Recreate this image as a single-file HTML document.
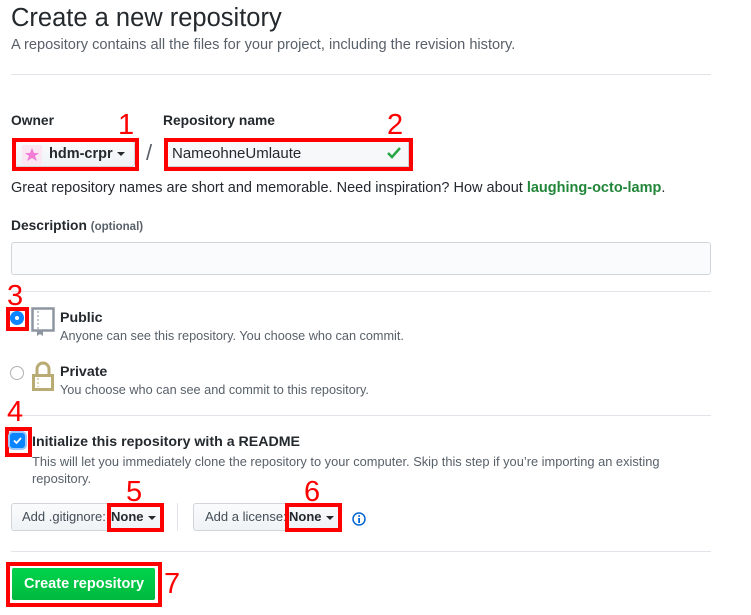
<!DOCTYPE html>
<html><head><meta charset="utf-8"><style>
*{box-sizing:border-box;margin:0;padding:0}
body{width:751px;height:615px;background:#fff;position:relative;font-family:"Liberation Sans",sans-serif;color:#24292e;overflow:hidden}
.a{position:absolute;white-space:nowrap}
.hr{position:absolute;left:11px;width:700px;height:1px;background:#e1e4e8}
.red{position:absolute;border:4px solid #f00}
.num{position:absolute;color:#f00;font-size:29px;line-height:28px}
.b{font-weight:bold}
.btn{position:absolute;background:linear-gradient(#fafbfc,#eff3f6);border:1px solid #d1d5da;border-radius:3px}
.caret{display:inline-block;width:0;height:0;border-left:4px solid transparent;border-right:4px solid transparent;border-top:4px solid #24292e;vertical-align:middle;margin-left:4px}
</style></head><body>
<div class="a" style="left:11px;top:3px;font-size:25.5px;line-height:30px">Create a new repository</div>
<div class="a" style="left:11px;top:37px;font-size:14.6px;color:#586069">A repository contains all the files for your project, including the revision history.</div>
<div class="hr" style="top:74px"></div>

<div class="a b" style="left:11px;top:113px;font-size:13.8px">Owner</div>
<div class="a b" style="left:163px;top:113px;font-size:13.8px">Repository name</div>
<div class="num" style="left:118px;top:111px">1</div>
<div class="num" style="left:387px;top:111px">2</div>
<div class="btn" style="left:15px;top:141px;width:120px;height:26px"></div>
<div class="red" style="left:12px;top:138px;width:127px;height:33px"></div>
<svg class="a" style="left:22px;top:145px" width="20" height="20"><rect width="20" height="20" fill="#fbe6f3"/><path d="M10 3 L12 8 L17 8 L13 11 L15 16 L10 13 L5 16 L7 11 L3 8 L8 8Z" fill="#f07ad4"/></svg>
<div class="a b" style="left:49px;top:146px;font-size:14.5px">hdm-crpr<span class="caret"></span></div>
<div class="a" style="left:146px;top:140px;font-size:22px;color:#586069">/</div>
<div class="a" style="left:167px;top:141px;width:242px;height:26px;background:#f6f8fa;border:1px solid #d1d5da"></div>
<div class="red" style="left:164px;top:138px;width:249px;height:33px"></div>
<div class="a" style="left:172px;top:145px;font-size:15px">NameohneUmlaute</div>
<svg class="a" style="left:386px;top:146px" width="16" height="14"><path d="M2 7 L6 11 L14 2" stroke="#28a745" stroke-width="2.5" fill="none"/></svg>
<div class="a" style="left:11px;top:180px;font-size:14.5px">Great repository names are short and memorable. Need inspiration? How about <b style="color:#22863a">laughing-octo-lamp</b>.</div>

<div class="a b" style="left:11px;top:218px;font-size:13.8px">Description <span style="font-size:11.5px;color:#586069">(optional)</span></div>
<div class="a" style="left:11px;top:242px;width:700px;height:33px;background:#fafbfc;border:1px solid #d1d5da;border-radius:3px"></div>
<div class="hr" style="top:291px"></div>

<div class="num" style="left:7px;top:282px">3</div>
<div class="red" style="left:6px;top:307px;width:23px;height:24px"></div>
<div class="a" style="left:10px;top:311px;width:14px;height:14px;border-radius:50%;background:#0a84ff"></div>
<div class="a" style="left:15px;top:316px;width:4px;height:4px;border-radius:50%;background:#fff"></div>
<svg class="a" style="left:31px;top:307px" width="24" height="30"><rect x="1.5" y="1.5" width="21" height="22" fill="none" stroke="#8d96a0" stroke-width="2.5"/><path d="M7 4v18" stroke="#8d96a0" stroke-dasharray="2 2"/><path d="M6 24v5l3-2 3 2v-5" fill="#8d96a0"/></svg>
<div class="a b" style="left:60px;top:310px;font-size:14.2px">Public</div>
<div class="a" style="left:60px;top:329px;font-size:12.7px;color:#586069">Anyone can see this repository. You choose who can commit.</div>

<div class="a" style="left:10px;top:366px;width:14px;height:14px;border-radius:50%;border:1px solid #b0b0b0;background:#fff"></div>
<svg class="a" style="left:31px;top:361px" width="24" height="31"><path d="M6 13V8a6 6 0 0 1 12 0v5" fill="none" stroke="#b9ab74" stroke-width="3"/><rect x="1" y="13" width="22" height="17" fill="#b9ab74"/><rect x="4" y="16" width="16" height="11" fill="#fff"/><path d="M7 17v9" stroke="#b9ab74" stroke-dasharray="2 2"/></svg>
<div class="a b" style="left:60px;top:364px;font-size:14.2px">Private</div>
<div class="a" style="left:60px;top:383px;font-size:12.7px;color:#586069">You choose who can see and commit to this repository.</div>
<div class="hr" style="top:415px"></div>

<div class="num" style="left:7px;top:398px">4</div>
<div class="red" style="left:5px;top:427px;width:27px;height:30px"></div>
<div class="a" style="left:10px;top:433px;width:15px;height:15px;border-radius:3px;background:#0a84ff;box-shadow:0 0 0 2px #9cc8fb"></div>
<svg class="a" style="left:12px;top:435px" width="11" height="11"><path d="M2 5.5 L4.5 8 L9 3" stroke="#fff" stroke-width="1.8" fill="none"/></svg>
<div class="a b" style="left:32px;top:434px;font-size:14.2px">Initialize this repository with a README</div>
<div class="a" style="left:32px;top:454px;font-size:12.85px;color:#586069">This will let you immediately clone the repository to your computer. Skip this step if you’re importing an existing</div>
<div class="a" style="left:32px;top:471px;font-size:12.85px;color:#586069">repository.</div>

<div class="btn" style="left:11px;top:503px;width:151px;height:28px"></div>
<div class="a" style="left:22px;top:509px;font-size:13px;color:#444d56">Add .gitignore:</div>
<div class="red" style="left:107px;top:503px;width:57px;height:29px"></div>
<div class="a b" style="left:111px;top:509px;font-size:13px">None<span class="caret"></span></div>
<div class="num" style="left:126px;top:478px">5</div>
<div class="a" style="left:177px;top:503px;width:1px;height:28px;background:#e1e4e8"></div>
<div class="btn" style="left:193px;top:503px;width:148px;height:28px"></div>
<div class="a" style="left:205px;top:509px;font-size:13px;color:#444d56">Add a license:</div>
<div class="red" style="left:285px;top:503px;width:57px;height:29px"></div>
<div class="a b" style="left:289px;top:509px;font-size:13px">None<span class="caret"></span></div>
<div class="num" style="left:304px;top:478px">6</div>
<svg class="a" style="left:352px;top:512px" width="14" height="14"><circle cx="7" cy="7" r="6" fill="none" stroke="#0366d6" stroke-width="1.5"/><rect x="6.2" y="6" width="1.8" height="5" fill="#0366d6"/><circle cx="7.1" cy="4" r="1" fill="#0366d6"/></svg>
<div class="hr" style="top:551px"></div>

<div class="red" style="left:6px;top:562px;width:156px;height:45px"></div>
<div class="a" style="left:12px;top:568px;width:143px;height:32px;background:linear-gradient(#00d44b,#00b83f);border-radius:2px"></div>
<div class="a b" style="left:24px;top:576px;font-size:14.5px;color:#fff">Create repository</div>
<div class="num" style="left:164px;top:570px">7</div>
</body></html>
